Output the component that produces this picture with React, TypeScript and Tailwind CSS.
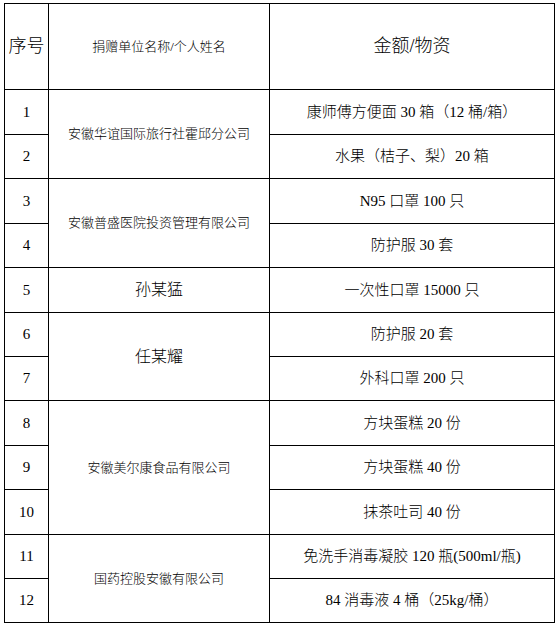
const rows: { n: string; h: number }[] = [
  { n: "1", h: 45 },
  { n: "2", h: 44 },
  { n: "3", h: 45 },
  { n: "4", h: 44 },
  { n: "5", h: 45 },
  { n: "6", h: 44 },
  { n: "7", h: 44 },
  { n: "8", h: 45 },
  { n: "9", h: 44 },
  { n: "10", h: 45 },
  { n: "11", h: 44 },
  { n: "12", h: 44 },
];

const items = [
  "康师傅方便面 30 箱（12 桶/箱）",
  "水果（桔子、梨）20 箱",
  "N95 口罩 100 只",
  "防护服 30 套",
  "一次性口罩 15000 只",
  "防护服 20 套",
  "外科口罩 200 只",
  "方块蛋糕 20 份",
  "方块蛋糕 40 份",
  "抹茶吐司 40 份",
  "免洗手消毒凝胶 120 瓶(500ml/瓶)",
  "84 消毒液 4 桶（25kg/桶）",
];

// donor name cells: start row index -> [rowSpan, text, size class]
const donors: Record<number, [number, string, string]> = {
  0: [2, "安徽华谊国际旅行社霍邱分公司", "text-[13px]"],
  2: [2, "安徽普盛医院投资管理有限公司", "text-[13px]"],
  4: [1, "孙某猛", "text-[16px]"],
  5: [2, "任某耀", "text-[16px]"],
  7: [3, "安徽美尔康食品有限公司", "text-[13px]"],
  10: [2, "国药控股安徽有限公司", "text-[13px]"],
};

const font = { fontFamily: '"Liberation Serif", "Noto Sans CJK SC", serif' };

export default function App() {
  return (
    <div className="w-[558px] h-[626px] bg-white pt-[3px] pl-[4px]">
      <table
        className="table-fixed border-collapse text-black font-light"
        style={font}
      >
        <colgroup>
          <col className="w-[44px]" />
          <col className="w-[221px]" />
          <col className="w-[285px]" />
        </colgroup>
        <tbody>
          <tr className="h-[86px]">
            <td className="border border-black text-center text-[18px] p-0">序号</td>
            <td className="border border-black text-center text-[13px] p-0">捐赠单位名称/个人姓名</td>
            <td className="border border-black text-center text-[18px] p-0">金额/物资</td>
          </tr>
          {rows.map((r, i) => {
            const d = donors[i];
            return (
              <tr key={r.n} style={{ height: r.h }}>
                <td className="border border-black text-center text-[15px] p-0">{r.n}</td>
                {d && (
                  <td
                    rowSpan={d[0]}
                    className={`border border-black text-center p-0 ${d[2]}`}
                  >
                    {d[1]}
                  </td>
                )}
                <td className="border border-black text-center text-[15px] p-0 whitespace-nowrap">
                  {items[i]}
                </td>
              </tr>
            );
          })}
        </tbody>
      </table>
    </div>
  );
}
